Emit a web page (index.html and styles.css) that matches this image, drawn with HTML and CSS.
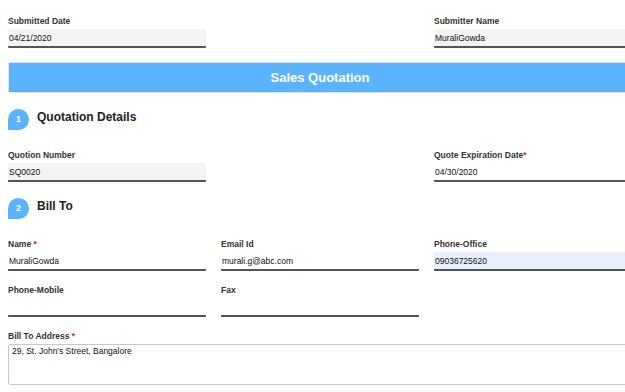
FILE: index.html
```html
<!DOCTYPE html>
<html lang="en">
<head>
    <meta charset="UTF-8">
    <meta name="viewport" content="width=device-width, initial-scale=1.0">
    <title>Sales Quotation</title>
    <link rel="stylesheet" href="styles.css">
</head>
<body>
    <div class="page">
        <div class="grid3">
            <div class="field">
                <label for="submittedDate">Submitted Date</label>
                <input type="text" id="submittedDate" class="readonly" value="04/21/2020" readonly>
            </div>
            <div></div>
            <div class="field">
                <label for="submitterName">Submitter Name</label>
                <input type="text" id="submitterName" class="readonly" value="MuraliGowda" readonly>
            </div>
        </div>

        <div class="banner">Sales Quotation</div>

        <div class="section-title"><span class="step">1</span><span>Quotation Details</span></div>

        <div class="grid3">
            <div class="field">
                <label for="quoteNumber">Quotion Number</label>
                <input type="text" id="quoteNumber" class="readonly" value="SQ0020" readonly>
            </div>
            <div></div>
            <div class="field">
                <label for="expiryDate">Quote Expiration Date<span class="req">*</span></label>
                <input type="text" id="expiryDate" value="04/30/2020">
            </div>
        </div>

        <div class="section-title"><span class="step">2</span><span>Bill To</span></div>

        <div class="grid3 rows">
            <div class="field">
                <label for="billName">Name <span class="req">*</span></label>
                <input type="text" id="billName" value="MuraliGowda">
            </div>
            <div class="field">
                <label for="billEmail">Email Id</label>
                <input type="text" id="billEmail" value="murali.g@abc.com">
            </div>
            <div class="field">
                <label for="phoneOffice">Phone-Office</label>
                <input type="text" id="phoneOffice" class="autofill" value="09036725620">
            </div>
            <div class="field">
                <label for="phoneMobile">Phone-Mobile</label>
                <input type="text" id="phoneMobile" value="">
            </div>
            <div class="field">
                <label for="fax">Fax</label>
                <input type="text" id="fax" value="">
            </div>
        </div>

        <div class="field address">
            <label for="billAddress">Bill To Address <span class="req">*</span></label>
            <textarea id="billAddress">29, St. John's Street, Bangalore</textarea>
        </div>
    </div>
</body>
</html>
```

FILE: styles.css
```css
body {
    margin: 8px 0 0 8px;
    overflow: hidden;
    font-family: Arial, "Liberation Sans", sans-serif;
    background: #fff;
    color: #222;
}
.page {
    width: 624px;
    padding-top: 7px;
}
.grid3 {
    display: grid;
    grid-template-columns: 198px 198px 198px;
    column-gap: 15px;
}
.grid3.rows {
    row-gap: 13px;
}
.field label {
    display: block;
    font-size: 8.5px;
    line-height: 12px;
    font-weight: bold;
    color: #333;
    margin-bottom: 2px;
}
.req {
    color: #e02020;
}
.field input {
    display: block;
    width: 100%;
    height: 19px;
    box-sizing: border-box;
    padding: 0 1px;
    border: none;
    border-bottom: 2px solid #555;
    border-radius: 2px 2px 1px 1px;
    background: #fff;
    font-family: Arial, "Liberation Sans", sans-serif;
    font-size: 8.5px;
    color: #111;
    outline: none;
}
.field input.readonly {
    background: #f3f3f3;
}
.field input.autofill {
    background: #e8f0fe;
}
.banner {
    margin-top: 14px;
    height: 29px;
    line-height: 29px;
    background: #5cb3fd;
    border: 1px solid #e2e2da;
    border-radius: 2px;
    color: #fff;
    font-size: 13px;
    font-weight: bold;
    text-align: center;
}
.section-title {
    display: flex;
    align-items: flex-start;
    gap: 8px;
    margin-top: 16px;
    margin-bottom: 19px;
    font-size: 12px;
    line-height: 17px;
    font-weight: bold;
    color: #222;
}
.step {
    width: 21px;
    height: 21px;
    border-radius: 11px 11px 11px 0;
    background: #5cb3fd;
    color: #fff;
    font-size: 9px;
    font-weight: bold;
    display: flex;
    align-items: center;
    justify-content: center;
}
.address {
    margin-top: 13px;
}
.address textarea {
    display: block;
    width: 100%;
    height: 41px;
    box-sizing: border-box;
    border: 1px solid #c8c8c8;
    border-radius: 2px;
    padding: 1px 3px;
    font-family: Arial, "Liberation Sans", sans-serif;
    font-size: 8.5px;
    color: #111;
    resize: none;
}
```
